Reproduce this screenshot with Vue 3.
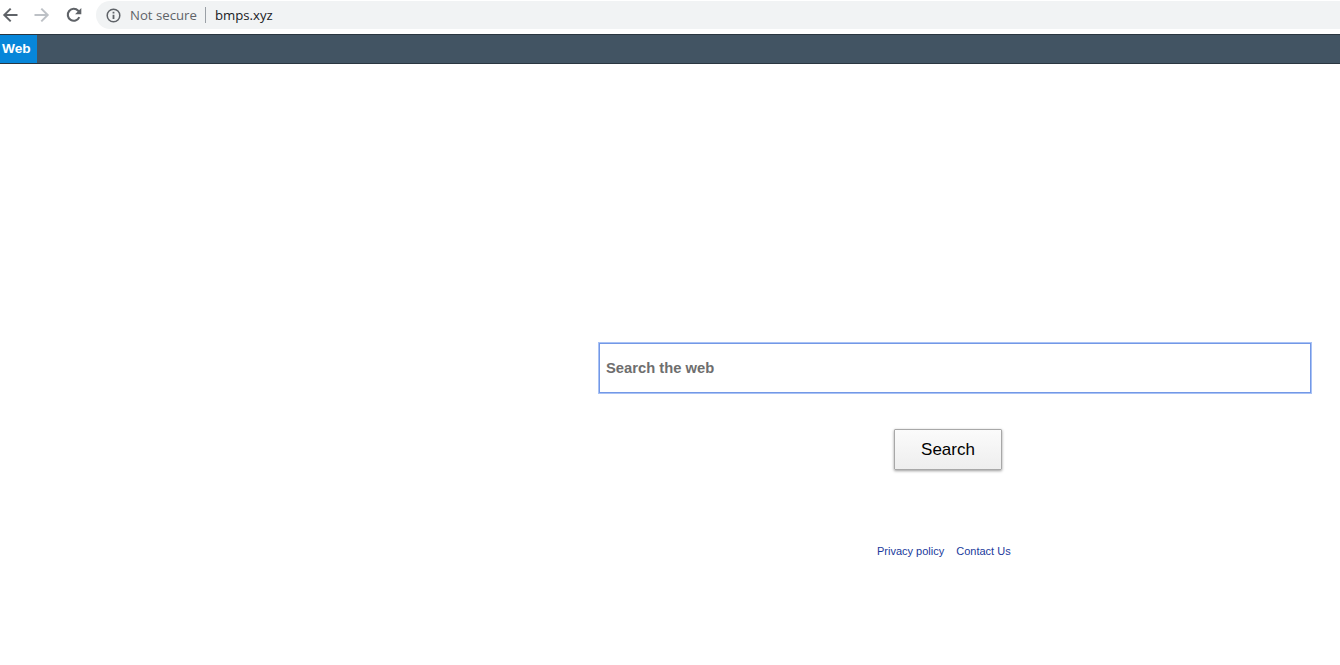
<script setup>
</script>

<template>
  <div class="page">
    <div class="chrome">
      <svg class="ic first" width="16" height="16" viewBox="0 0 16 16"><path d="M15.5 8H2.5M8.7 1.6 2.3 8l6.4 6.4" fill="none" stroke="#5f6368" stroke-width="2"/></svg>
      <svg class="ic second" width="16" height="16" viewBox="0 0 16 16"><path d="M.5 8h13M7.3 1.6 13.7 8l-6.4 6.4" fill="none" stroke="#bdc1c6" stroke-width="2"/></svg>
      <svg class="ic third" width="16" height="16" viewBox="0 0 16 16"><path d="M13.3 10.2A6 6 0 1 1 12.2 3.7L14 5.6" fill="none" stroke="#5f6368" stroke-width="2.1"/><path d="M15.3 1V7.2H9.1z" fill="#5f6368"/></svg>
      <div class="omni">
        <svg width="15" height="15" viewBox="0 0 15 15"><circle cx="7.5" cy="7.5" r="6.3" fill="none" stroke="#5f6368" stroke-width="1.5"/><path d="M6.6 6.7h1.8v4.4H6.6zM6.6 3.8h1.8v1.7H6.6z" fill="#5f6368"/></svg>
        <span class="insecure">Not secure</span>
        <span class="sep"></span>
        <span class="url">bmps.xyz</span>
      </div>
    </div>
    <nav class="nav"><a class="tab">Web</a></nav>
    <main class="main">
      <div class="column">
        <div class="input">Search the web</div>
        <button class="btn">Search</button>
        <div class="links"><a>Privacy policy</a><a>Contact Us</a></div>
      </div>
    </main>
  </div>
</template>

<style scoped>
.page { width: 1340px; height: 665px; overflow: hidden; background: #fff; font-family: "Liberation Sans", Arial, sans-serif; }
.chrome { height: 34px; display: flex; align-items: center; box-sizing: border-box; padding: 1px 0 5px; background: #fff; }
.ic { flex: none; }
.first { margin-left: 2px; }
.second { margin-left: 16px; }
.third { margin-left: 16px; }
.omni { margin-left: 14px; flex: 1; height: 28px; background: #f1f3f4; border-radius: 14px 0 0 14px; display: flex; align-items: center; padding-left: 10px; font-family: "Open Sans", sans-serif; font-size: 13.2px; }
.insecure { margin-left: 9px; color: #5f6368; }
.sep { width: 1px; height: 16px; background: #9aa0a6; margin: 0 9px 0 8px; }
.url { color: #202124; }
.nav { height: 30px; box-sizing: border-box; background: #425463; border-top: 1px solid #2a3640; border-bottom: 1px solid #2a3640; display: flex; }
.tab { width: 37px; background: #0786d9; color: #fff; font-weight: 700; font-size: 13.7px; line-height: 28px; padding-left: 2px; box-sizing: border-box; }
.main { display: flex; padding: 278px 0 0 598px; }
.column { width: 714px; display: flex; flex-direction: column; }
.input { height: 52px; box-sizing: border-box; border: 1px solid #a9c2f5; box-shadow: 0 0 0 1px #7398e6 inset; padding-left: 7px; display: flex; align-items: center; font-weight: 700; font-size: 14.75px; color: #6e6e6e; }
.btn { align-self: flex-start; margin: 35px 0 0 296px; width: 108px; height: 41px; border: 1px solid #a8a8a8; border-radius: 1px; background: linear-gradient(#fbfbfb, #eeeeee); box-shadow: 0 1px 3px rgba(0,0,0,.4); font-family: inherit; font-size: 17px; color: #000; padding: 0; }
.links { margin: 74px 0 0 279px; display: flex; gap: 12px; font-size: 11px; line-height: 14px; color: #1a3a9c; }
</style>
